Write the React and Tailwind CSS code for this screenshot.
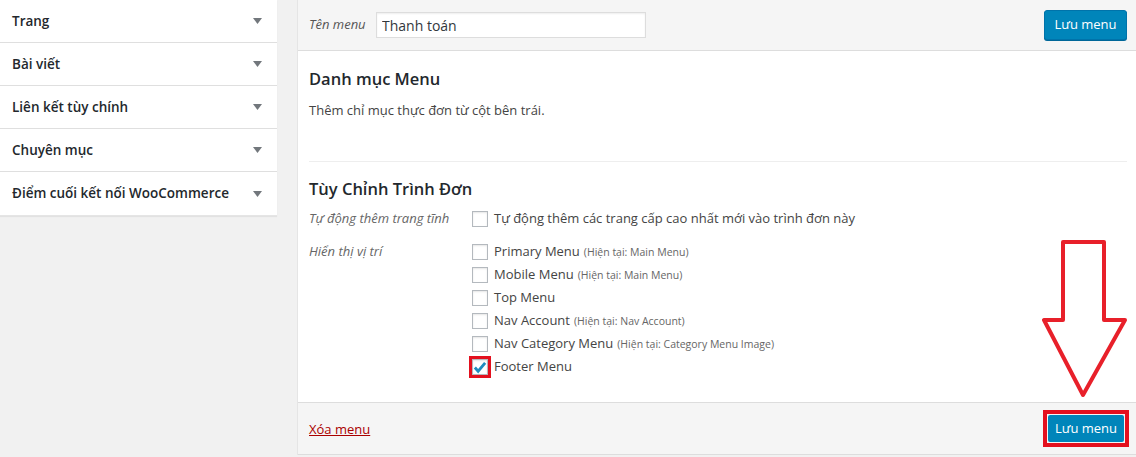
import { useState } from 'react';

const sections = ['Trang', 'Bài viết', 'Liên kết tùy chính', 'Chuyên mục', 'Điểm cuối kết nối WooCommerce'];

const locations = [
  { name: 'Primary Menu', note: '(Hiện tại: Main Menu)' },
  { name: 'Mobile Menu', note: '(Hiện tại: Main Menu)' },
  { name: 'Top Menu', note: '' },
  { name: 'Nav Account', note: '(Hiện tại: Nav Account)' },
  { name: 'Nav Category Menu', note: '(Hiện tại: Category Menu Image)' },
  { name: 'Footer Menu', note: '', checked: true },
];

const Caret = () => (
  <svg width="9" height="6" viewBox="0 0 9 6" className="text-[#72777c]">
    <path d="M0 0 L9 0 L4.5 6 Z" fill="currentColor" />
  </svg>
);

const Box = ({ checked }) => (
  <span className="w-4 h-4 border border-[#b4b9be] bg-white shadow-[inset_0_1px_2px_rgba(0,0,0,0.1)] flex items-center justify-center">
    {checked && (
      <svg width="15" height="13" viewBox="0 0 15 13">
        <path d="M2 6.5 L5.5 10.5 L13 1.5" fill="none" stroke="#1e8cbe" strokeWidth="3" />
      </svg>
    )}
  </span>
);

const MenuEditor = () => {
  const [menuName, setMenuName] = useState('Thanh toán');

  return (
    <div className="relative flex h-[457px] overflow-hidden bg-[#f1f1f1] text-[#444] font-['Open_Sans',sans-serif]">
      {/* left column - accordion */}
      <div className="w-[277px] shrink-0">
        <div className="bg-white shadow-[0_1px_1px_rgba(0,0,0,0.06)] border-b border-[#e5e5e5]">
          {sections.map((s, i) => (
            <div
              key={s}
              className={`h-[43px] flex items-center justify-between pl-3 pr-[15px] ${i < sections.length - 1 ? 'border-b border-[#dfdfdf]' : ''}`}
            >
              <span className="text-[13.5px] font-semibold text-[#23282d]">{s}</span>
              <Caret />
            </div>
          ))}
        </div>
      </div>

      {/* right column - menu settings */}
      <div className="ml-[20px] flex-1 flex flex-col">
        <div className="border-l border-[#e5e5e5] flex flex-col">
          <div className="h-[51px] bg-[#f5f5f5] border-b border-[#dddddd] flex items-center pl-[11px] pr-[9px]">
            <span className="italic text-[13px] text-[#555] w-[67px]">Tên menu</span>
            <input
              value={menuName}
              onChange={(e) => setMenuName(e.target.value)}
              className="w-[270px] h-[26px] border border-[#dddddd] bg-white px-[5px] text-[14px] text-[#32373c] outline-none shadow-[inset_0_1px_2px_rgba(0,0,0,0.07)]"
            />
            <button className="ml-auto w-[83px] h-[30px] rounded-[3px] bg-[#0085ba] border border-[#0073aa] text-white text-[13px] shadow-[0_1px_0_#006799]">
              Lưu menu
            </button>
          </div>

          <div className="h-[351px] bg-white pl-[11px] pr-[9px]">
            <h3 className="pt-[15px] text-[16.5px] font-semibold text-[#23282d] leading-[26px]">Danh mục Menu</h3>
            <p className="mt-[8px] text-[13px] leading-[20px]">Thêm chỉ mục thực đơn từ cột bên trái.</p>
            <div className="mt-[41px] border-t border-[#eeeeee]" />
            <h3 className="pt-[14px] text-[16.5px] font-semibold text-[#23282d] leading-[26px]">Tùy Chỉnh Trình Đơn</h3>

            <div className="mt-[7px] flex items-center h-[20px]">
              <span className="w-[163px] italic text-[13px] text-[#666]">Tự động thêm trang tĩnh</span>
              <Box />
              <span className="ml-[6px] text-[13px]">Tự động thêm các trang cấp cao nhất mới vào trình đơn này</span>
            </div>

            <div className="mt-[13px] flex">
              <span className="w-[163px] italic text-[13px] text-[#666] leading-[20px] -mt-[1px]">Hiển thị vị trí</span>
              <div className="flex flex-col gap-[3px]">
                {locations.map((l) => (
                  <div key={l.name} className="flex items-center h-[20px]">
                    <span className={`${l.checked ? 'outline-[3px] outline-[#e3101e] outline' : ''}`}>
                      <Box checked={l.checked} />
                    </span>
                    <span className="ml-[6px] text-[13px]">
                      {l.name}
                      {l.note && <span className="ml-1 text-[10.5px] text-[#666]">{l.note}</span>}
                    </span>
                  </div>
                ))}
              </div>
            </div>
          </div>

          <div className="h-[53px] bg-[#f5f5f5] border-t border-[#dddddd] border-b flex items-center pl-[11px] pr-[7px]">
            <a href="#" className="mt-[3px] text-[13px] text-[#a00] underline">Xóa menu</a>
            <div className="ml-auto border-[4px] border-[#e3101e] p-[1px]">
              <button className="w-[76px] h-[27px] rounded-[2px] bg-[#0085ba] text-white text-[13px]">Lưu menu</button>
            </div>
          </div>
        </div>
      </div>

      {/* annotation arrow */}
      <svg className="absolute left-[1038px] top-[237px]" width="94" height="166" viewBox="1038 237 94 166">
        <path
          d="M1063 242 L1104 242 L1104 320 L1125 320 L1083 395 L1044 320 L1063 320 Z"
          fill="none"
          stroke="#e8202a"
          strokeWidth="4"
          strokeLinejoin="round"
        />
      </svg>
    </div>
  );
};

export default function App() {
  return <MenuEditor />;
}
